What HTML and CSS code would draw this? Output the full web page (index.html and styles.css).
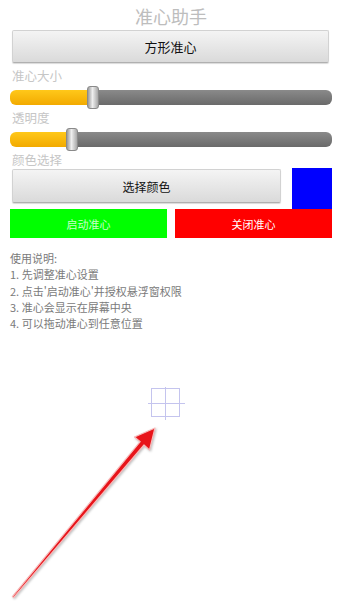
FILE: index.html
```html
<!DOCTYPE html>
<html lang="zh">
<head>
    <meta charset="UTF-8">
    <meta name="viewport" content="width=device-width, initial-scale=1.0">
    <title>准心助手</title>
    <link rel="stylesheet" href="styles.css">
</head>
<body>
    <div class="screen">
        <h1 class="title">准心助手</h1>
        <button class="gray-button shape-button">方形准心</button>

        <p class="field-label">准心大小</p>
        <div class="slider">
            <div class="slider-fill" style="width: 77px"></div>
            <div class="slider-thumb"></div>
            <div class="slider-rest"></div>
        </div>

        <p class="field-label">透明度</p>
        <div class="slider">
            <div class="slider-fill" style="width: 56px"></div>
            <div class="slider-thumb"></div>
            <div class="slider-rest"></div>
        </div>

        <p class="field-label">颜色选择</p>
        <div class="color-row">
            <button class="gray-button color-button">选择颜色</button>
            <div class="color-preview"></div>
        </div>

        <div class="action-row">
            <button class="action-button start-button">启动准心</button>
            <button class="action-button stop-button">关闭准心</button>
        </div>

        <div class="help">
            <p>使用说明:</p>
            <p>1. 先调整准心设置</p>
            <p>2. 点击'启动准心'并授权悬浮窗权限</p>
            <p>3. 准心会显示在屏幕中央</p>
            <p>4. 可以拖动准心到任意位置</p>
        </div>

        <div class="crosshair">
            <div class="cross-v"></div>
            <div class="cross-h"></div>
        </div>

        <svg class="arrow" width="170" height="183" viewBox="0 420 170 183">
            <path d="M155 428 L149.5 450 L144 445 L13.6 597.6 L12.4 596.6 L140.2 441.7 L134.5 437 Z"
                  fill="#e8141a" stroke="#f7b9b9" stroke-width="1.2" stroke-linejoin="round"/>
        </svg>
    </div>
</body>
</html>
```

FILE: styles.css
```css
body {
    margin: 0;
    background: #fff;
    font-family: "Noto Sans CJK SC", "Noto Sans", sans-serif;
}
.screen {
    position: relative;
    height: 603px;
    padding: 0 9px 0 10px;
    overflow: hidden;
}
.title {
    margin: 0;
    padding-top: 5px;
    font-size: 18px;
    line-height: 22px;
    font-weight: normal;
    text-align: center;
    color: #bdbdbd;
}
.gray-button {
    display: block;
    border: 1px solid #d2d2d2;
    border-bottom-color: #b0b0b0;
    border-radius: 2px;
    background: linear-gradient(#f4f4f4, #dadada);
    box-shadow: 0 1px 1px rgba(0, 0, 0, 0.15);
    color: #111;
    font-family: inherit;
    padding: 0;
}
.shape-button {
    width: 317px;
    height: 33px;
    margin: 3px 0 5px 2px;
    font-size: 13px;
}
.field-label {
    margin: 0;
    padding-left: 2px;
    font-size: 12.5px;
    line-height: 16px;
    color: #c6c6c6;
}
.slider {
    display: flex;
    align-items: center;
    height: 23px;
    margin: 2px 0 1px;
}
.slider-fill {
    height: 15px;
    border-radius: 6px 0 0 6px;
    background: linear-gradient(#ffc81a, #f2aa00);
}
.slider-thumb {
    width: 10px;
    height: 21px;
    border: 1px solid #8a8a8a;
    border-radius: 3px;
    background: linear-gradient(to right, #9a9a9a, #eeeeee 45%, #a8a8a8);
}
.slider-rest {
    flex: 1;
    height: 15px;
    border-radius: 0 6px 6px 0;
    background: linear-gradient(#8a8a8a, #6a6a6a);
}
.color-row {
    display: flex;
    align-items: flex-start;
    justify-content: space-between;
}
.color-button {
    width: 269px;
    height: 34px;
    margin: 1px 0 0 2px;
    font-size: 12px;
}
.color-preview {
    width: 40px;
    height: 41px;
    background: #0000ff;
}
.action-row {
    display: grid;
    grid-template-columns: 157px 157px;
    column-gap: 8px;
}
.action-button {
    height: 29px;
    border: none;
    color: #fff;
    font-family: inherit;
    font-size: 11px;
}
.start-button {
    background: #00ff00;
    color: #c8ffc8;
}
.stop-button {
    background: #ff0000;
}
.help {
    margin-top: 12px;
    font-size: 11px;
    line-height: 16.3px;
    color: #7a7a7a;
}
.help p {
    margin: 0;
}
.crosshair {
    position: absolute;
    left: 151px;
    top: 388px;
    width: 29px;
    height: 29px;
    border: 1px solid #c4c4ee;
    box-sizing: border-box;
}
.cross-v {
    position: absolute;
    left: 13px;
    top: -2px;
    width: 1px;
    height: 33px;
    background: #c4c4ee;
}
.cross-h {
    position: absolute;
    left: -4px;
    top: 14px;
    width: 37px;
    height: 1px;
    background: #c4c4ee;
}
.arrow {
    position: absolute;
    left: 0;
    top: 420px;
    filter: drop-shadow(1px 1px 1px rgba(0, 0, 0, 0.25));
}
```
